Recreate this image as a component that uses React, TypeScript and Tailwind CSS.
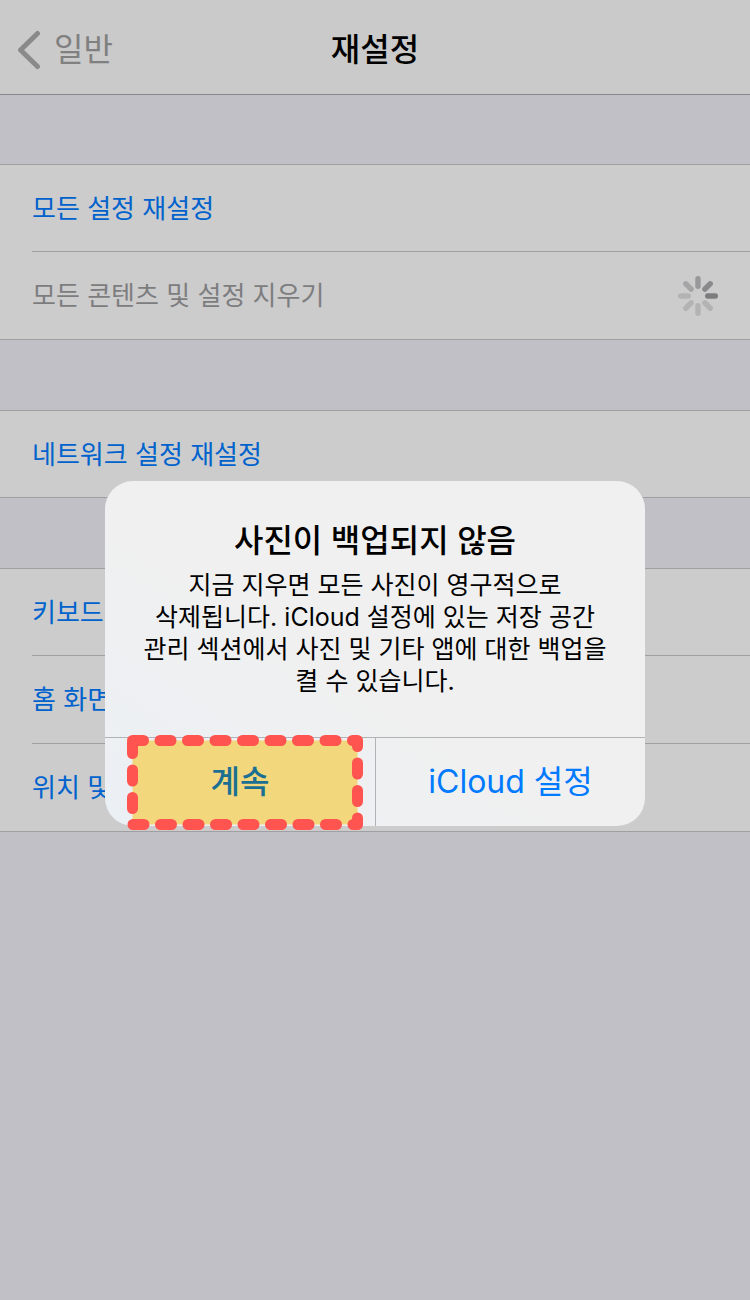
const SPOKES = [
  { angle: 0, color: "#98989a" },
  { angle: 45, color: "#89898c" },
  { angle: 90, color: "#7d7d80" },
  { angle: 135, color: "#b3b3b4" },
  { angle: 180, color: "#b3b3b4" },
  { angle: 225, color: "#b3b3b4" },
  { angle: 270, color: "#b3b3b4" },
  { angle: 315, color: "#a5a5a7" },
];

function Spinner() {
  return (
    <svg width="40" height="40" viewBox="0 0 40 40" role="img" aria-label="로딩 중">
      {SPOKES.map((s) => (
        <line
          key={s.angle}
          x1="20"
          y1="2.7"
          x2="20"
          y2="10.3"
          stroke={s.color}
          strokeWidth="5.4"
          strokeLinecap="round"
          transform={`rotate(${s.angle} 20 20)`}
        />
      ))}
    </svg>
  );
}

type Item = { label: string; loading?: boolean };

function Group({ items }: { items: Item[] }) {
  return (
    <ul className="border-y border-[#a0a0a2] bg-[#cccccc] pl-8">
      {items.map((item) => (
        <li key={item.label} className="h-[88px] border-t border-[#a0a0a2] first:h-[86px] first:border-t-0">
          <button
            type="button"
            disabled={item.loading}
            className={
              item.loading
                ? "flex h-full w-full items-center justify-between pr-8 text-left text-[26px] text-[#7d7d80]"
                : "flex h-full w-full items-center justify-between pr-8 text-left text-[26px] text-[#0062cc]"
            }
          >
            <span>{item.label}</span>
            {item.loading && <Spinner />}
          </button>
        </li>
      ))}
    </ul>
  );
}

const BODY = [
  "지금 지우면 모든 사진이 영구적으로",
  "삭제됩니다. iCloud 설정에 있는 저장 공간",
  "관리 섹션에서 사진 및 기타 앱에 대한 백업을",
  "켤 수 있습니다.",
];

function Alert() {
  return (
    <div className="fixed inset-0 flex items-center justify-center pt-[7px]">
      <div
        role="alertdialog"
        aria-labelledby="alert-title"
        className="w-[540px] rounded-[28px] bg-linear-to-tr from-[#ebf0f5] to-[#f0f0f0] to-45%"
      >
        <div className="px-8 pt-9 pb-10 text-center text-black">
          <h2 id="alert-title" className="pb-1 text-[32px] leading-[48px] font-medium">
            사진이 백업되지 않음
          </h2>
          <p className="text-[25px] leading-[32px]">
            {BODY.map((line) => (
              <span key={line} className="block whitespace-nowrap">
                {line}
              </span>
            ))}
          </p>
        </div>
        <div className="grid grid-cols-2 border-t border-[#b2b3b6] text-[32px]">
          <button type="button" className="relative h-[88px] font-medium text-[#1b6f92]">
            <svg className="absolute -top-[3px] left-[22px]" width="236" height="95" viewBox="0 0 236 95" aria-hidden="true">
              <path
                d="M5.5 5.5H230.5V89.5H5.5Z"
                fill="#f2d77c"
                stroke="#ff544f"
                strokeWidth="11"
                strokeLinecap="round"
                strokeLinejoin="round"
                strokeDasharray="11 16.5"
              />
            </svg>
            <span className="relative">계속</span>
          </button>
          <button type="button" className="h-[88px] border-l border-[#b2b3b6] text-[#007aff]">
            iCloud 설정
          </button>
        </div>
      </div>
    </div>
  );
}

export default function App() {
  return (
    <div className="min-h-screen bg-[#c1c0c6] font-['Inter','Noto_Sans_CJK_KR',sans-serif]">
      <header className="grid h-[95px] grid-cols-3 items-center border-b border-[#88888a] bg-[#cacaca] pt-1.5 text-[32px]">
        <a href="#general" className="flex items-center gap-3 pl-4 text-[#808080]">
          <svg width="26" height="40" viewBox="0 0 26 40" aria-hidden="true">
            <path
              d="M21.5 3.5L4.5 20L21.5 36.5"
              fill="none"
              stroke="#8a8a8a"
              strokeWidth="5"
              strokeLinecap="round"
              strokeLinejoin="round"
            />
          </svg>
          일반
        </a>
        <h1 className="text-center font-medium text-black">재설정</h1>
      </header>
      <main className="flex flex-col gap-[70px] pt-[69px]">
        <Group items={[{ label: "모든 설정 재설정" }, { label: "모든 콘텐츠 및 설정 지우기", loading: true }]} />
        <Group items={[{ label: "네트워크 설정 재설정" }]} />
        <Group items={[{ label: "키보드" }, { label: "홈 화면" }, { label: "위치 및" }]} />
      </main>
      <Alert />
    </div>
  );
}
